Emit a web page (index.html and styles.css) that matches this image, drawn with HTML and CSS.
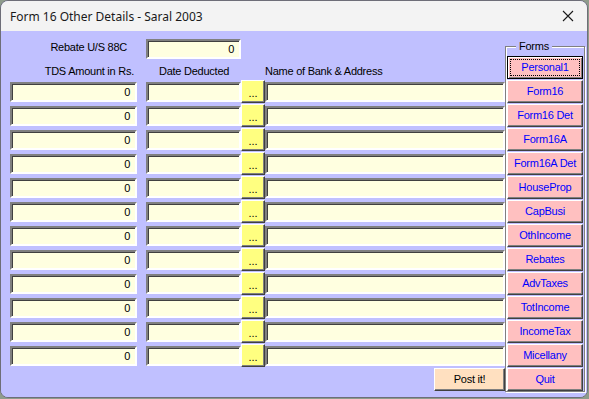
FILE: index.html
```html
<!DOCTYPE html>
<html lang="en">

<head>
  <meta charset="UTF-8">
  <title>Form 16 Other Details - Saral 2003</title>
  <link rel="stylesheet" href="styles.css">
</head>

<body>
  <div class="window">
    <div class="titlebar">
      <span class="title">Form 16 Other Details - Saral 2003</span>
      <svg class="close" width="12" height="12" viewBox="0 0 12 12">
        <path d="M1 1 L11 11 M11 1 L1 11" stroke="#1a1a1a" stroke-width="1.1" fill="none" />
      </svg>
    </div>

    <div class="client">
      <div class="main">
        <div class="rebate-row">
          <label class="rebate-label">Rebate U/S 88C</label>
          <div class="field rebate-field">0</div>
        </div>

        <div class="head-row">
          <span class="head-amount">TDS Amount in Rs.</span>
          <span class="head-date">Date Deducted</span>
          <span class="head-bank">Name of Bank &amp; Address</span>
        </div>

        <!-- 12 TDS rows -->
        <div class="tds-row"><div class="field amount">0</div><div class="field date"></div><div class="pick">...</div><div class="field bank"></div></div>
        <div class="tds-row"><div class="field amount">0</div><div class="field date"></div><div class="pick">...</div><div class="field bank"></div></div>
        <div class="tds-row"><div class="field amount">0</div><div class="field date"></div><div class="pick">...</div><div class="field bank"></div></div>
        <div class="tds-row"><div class="field amount">0</div><div class="field date"></div><div class="pick">...</div><div class="field bank"></div></div>
        <div class="tds-row"><div class="field amount">0</div><div class="field date"></div><div class="pick">...</div><div class="field bank"></div></div>
        <div class="tds-row"><div class="field amount">0</div><div class="field date"></div><div class="pick">...</div><div class="field bank"></div></div>
        <div class="tds-row"><div class="field amount">0</div><div class="field date"></div><div class="pick">...</div><div class="field bank"></div></div>
        <div class="tds-row"><div class="field amount">0</div><div class="field date"></div><div class="pick">...</div><div class="field bank"></div></div>
        <div class="tds-row"><div class="field amount">0</div><div class="field date"></div><div class="pick">...</div><div class="field bank"></div></div>
        <div class="tds-row"><div class="field amount">0</div><div class="field date"></div><div class="pick">...</div><div class="field bank"></div></div>
        <div class="tds-row"><div class="field amount">0</div><div class="field date"></div><div class="pick">...</div><div class="field bank"></div></div>
        <div class="tds-row"><div class="field amount">0</div><div class="field date"></div><div class="pick">...</div><div class="field bank"></div></div>

        <div class="post-row">
          <div class="post-btn">Post it!</div>
        </div>
      </div>

      <div class="forms">
        <span class="forms-label">Forms</span>
        <div class="form-btn focus">Personal1</div>
        <div class="form-btn">Form16</div>
        <div class="form-btn">Form16 Det</div>
        <div class="form-btn">Form16A</div>
        <div class="form-btn">Form16A Det</div>
        <div class="form-btn">HouseProp</div>
        <div class="form-btn">CapBusi</div>
        <div class="form-btn">OthIncome</div>
        <div class="form-btn">Rebates</div>
        <div class="form-btn">AdvTaxes</div>
        <div class="form-btn">TotIncome</div>
        <div class="form-btn">IncomeTax</div>
        <div class="form-btn">Micellany</div>
        <div class="form-btn">Quit</div>
      </div>
    </div>
  </div>
</body>

</html>
```

FILE: styles.css
```css
/* Page reset */
body {
  margin: 0;
  background-color: #8f9c8c;
  font-family: 'Liberation Sans', Arial, sans-serif;
  font-size: 11px;
  letter-spacing: -0.25px;
  color: #000000;
}

/* Window frame */
.window {
  width: 586px;
  height: 396px;
  border: 1px solid #6e6e78;
  border-radius: 8px;
  overflow: hidden;
  background-color: #c0c0ff;
}

.titlebar {
  height: 30px;
  background-color: #f3f3f3;
  display: flex;
  align-items: center;
  justify-content: space-between;
  padding: 0 10px 0 9px;
}

.title {
  font-family: 'Noto Sans', 'Open Sans', sans-serif;
  font-size: 12px;
  letter-spacing: 0;
  color: #1a1a1a;
}

.close {
  margin-right: 3px;
}

/* Client area */
.client {
  display: flex;
  background-color: #c0c0ff;
  height: 366px;
}

.main {
  padding: 8px 0 0 9px;
  width: 495px;
}

/* Shared sunken field */
.field {
  box-sizing: border-box;
  height: 20px;
  background-color: #ffffe0;
  border: 2px solid;
  border-color: #808080 #ffffff #ffffff #808080;
  box-shadow: inset 1px 1px 0 #404040;
  text-align: right;
  padding: 0 5px;
  line-height: 16px;
}

.rebate-row {
  display: flex;
  height: 20px;
}

.rebate-label {
  width: 117px;
  text-align: right;
  line-height: 16px;
}

.rebate-field {
  margin-left: 19px;
  width: 95px;
}

.head-row {
  display: flex;
  height: 23px;
  line-height: 24px;
}

.head-amount {
  width: 124px;
  padding-right: 3px;
  text-align: right;
}

.head-date {
  margin-left: 9px;
  width: 119px;
  padding-left: 13px;
  box-sizing: border-box;
}

/* TDS rows */
.tds-row {
  display: flex;
  height: 20px;
  margin-bottom: 4px;
}

.amount {
  width: 127px;
  margin-right: 9px;
}

.date {
  width: 95px;
}

.bank {
  width: 240px;
}

.pick {
  box-sizing: border-box;
  width: 24px;
  height: 23px;
  margin-top: -2px;
  background-color: #ffff80;
  border: 1px solid;
  border-color: #ffffff #404040 #404040 #ffffff;
  box-shadow: inset -1px -1px 0 #808080;
  text-align: center;
  line-height: 24px;
  letter-spacing: 0;
}

.post-row {
  display: flex;
  justify-content: flex-end;
  margin-top: -2px;
}

.post-btn {
  box-sizing: border-box;
  width: 71px;
  height: 23px;
  background-color: #ffe0c0;
  border: 1px solid;
  border-color: #ffffff #404040 #404040 #ffffff;
  box-shadow: inset -1px -1px 0 #808080;
  text-align: center;
  line-height: 21px;
}

/* Forms group */
.forms {
  position: relative;
  margin: 15px 0 0 0;
  width: 80px;
  height: 346px;
  box-sizing: border-box;
  border: 1px solid #808080;
  box-shadow: 1px 1px 0 #ffffff, inset 1px 1px 0 #ffffff;
  padding: 9px 0 0 1px;
  display: flex;
  flex-direction: column;
  gap: 1px;
}

.forms-label {
  position: absolute;
  top: -7px;
  left: 10px;
  padding: 0 3px;
  background-color: #c0c0ff;
  line-height: 13px;
}

.form-btn {
  box-sizing: border-box;
  width: 76px;
  height: 23px;
  background-color: #ffc0c0;
  color: #0000ff;
  border: 1px solid;
  border-color: #ffffff #404040 #404040 #ffffff;
  box-shadow: inset -1px -1px 0 #808080;
  text-align: center;
  line-height: 21px;
}

.form-btn.focus {
  border-color: #000000;
  box-shadow: inset 1px 1px 0 #ffffff, inset -1px -1px 0 #808080;
  outline: 1px dotted #000000;
  outline-offset: -4px;
}
```
